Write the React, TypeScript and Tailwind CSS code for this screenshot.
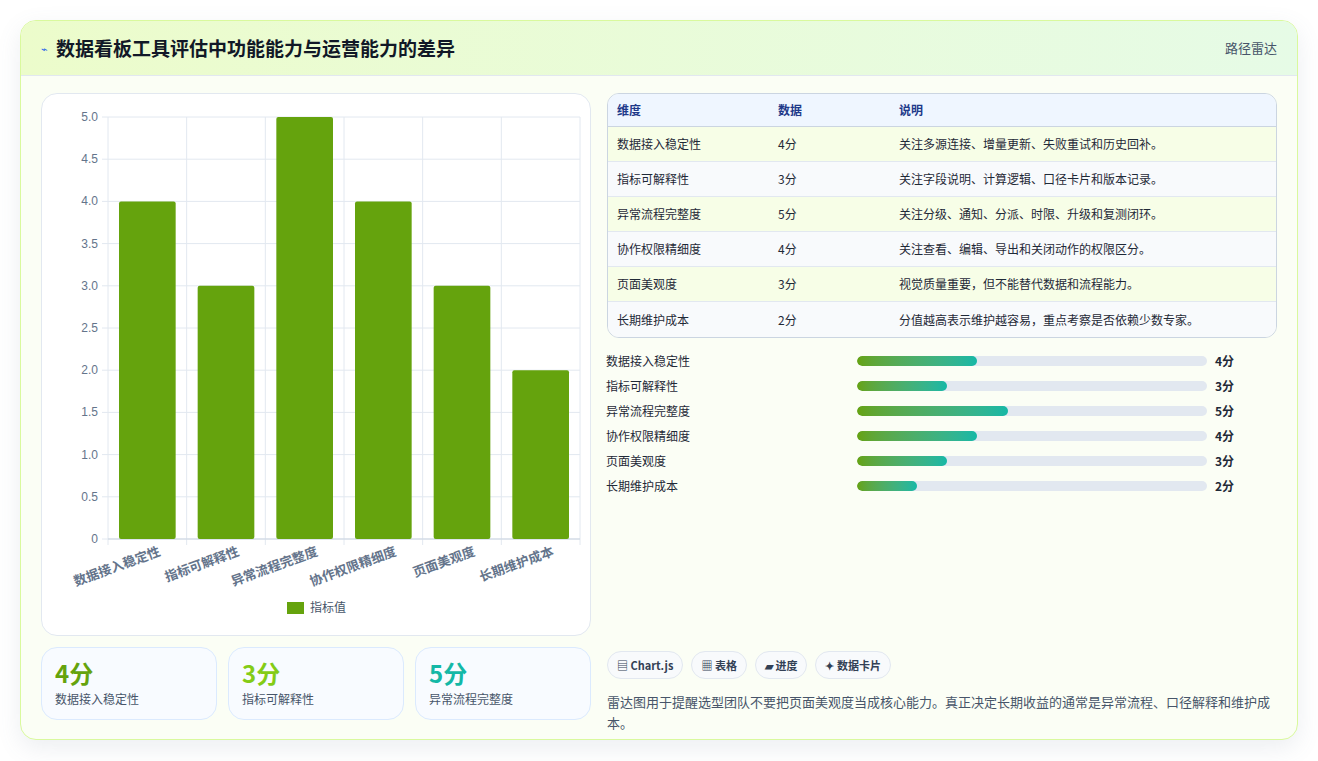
import React from "react";

const F = { fontFamily: '"Noto Sans CJK SC", "Noto Sans", sans-serif' };
const items = [
  ["数据接入稳定性", 4, "关注多源连接、增量更新、失败重试和历史回补。"],
  ["指标可解释性", 3, "关注字段说明、计算逻辑、口径卡片和版本记录。"],
  ["异常流程完整度", 5, "关注分级、通知、分派、时限、升级和复测闭环。"],
  ["协作权限精细度", 4, "关注查看、编辑、导出和关闭动作的权限区分。"],
  ["页面美观度", 3, "视觉质量重要，但不能替代数据和流程能力。"],
  ["长期维护成本", 2, "分值越高表示维护越容易，重点考察是否依赖少数专家。"],
] as const;

function Chart() {
  const L = 66, R = 538, T = 23, B = 445;
  const cw = (R - L) / 6;
  const y = (v: number) => B - (v / 5) * (B - T);
  const ticks = [0, 0.5, 1, 1.5, 2, 2.5, 3, 3.5, 4, 4.5, 5];
  return (
    <svg width="550" height="541" style={{ fontFamily: '"Noto Sans CJK SC", sans-serif' }}>
      {ticks.map((t) => (
        <g key={t}>
          <line x1={L - 6} x2={R} y1={y(t)} y2={y(t)} stroke="#e2e8f0" />
          <text x={L - 10} y={y(t) + 4} textAnchor="end" fontSize="12" fill="#64748b" fontFamily="Liberation Sans, sans-serif">
            {t === 0 ? "0" : t.toFixed(1)}
          </text>
        </g>
      ))}
      {Array.from({ length: 7 }).map((_, i) => (
        <line key={i} x1={L + i * cw} x2={L + i * cw} y1={T} y2={B + 6} stroke="#e2e8f0" />
      ))}
      <line x1={L} x2={R} y1={B} y2={B} stroke="#cbd5e1" />
      {items.map(([n, v], i) => (
        <g key={n}>
          <rect x={L + i * cw + 11} y={y(v)} width={cw - 22} height={B - y(v)} rx="2" fill="#65a30d" />
          <text
            transform={`translate(${L + i * cw + cw / 2 + 14},${B + 16}) rotate(-20)`}
            textAnchor="end"
            fontSize="13"
            fontWeight="700"
            fill="#64748b"
          >
            {n}
          </text>
        </g>
      ))}
      <rect x="245" y="508" width="17" height="12" fill="#65a30d" />
      <text x="268" y="518" fontSize="12" fill="#475569">指标值</text>
    </svg>
  );
}

export default function App() {
  return (
    <div className="w-[1318px] h-[761px] bg-white p-5" style={F}>
      <div className="h-[720px] rounded-2xl border border-[#d9f99d] bg-[#fbfef5] shadow-[0_8px_24px_rgba(100,116,139,0.12)] overflow-hidden flex flex-col">
        <div className="h-[55px] flex items-center justify-between px-5 bg-gradient-to-r from-[#ecfccb] to-[#e6fbe6] border-b border-[#e2e8f0]">
          <div className="flex items-center gap-2">
            <span className="text-[11px] text-[#2563eb]">⌁</span>
            <span className="text-[19px] font-bold text-[#111827]">数据看板工具评估中功能能力与运营能力的差异</span>
          </div>
          <span className="text-[13px] text-[#475569]">路径雷达</span>
        </div>
        <div className="flex gap-4 px-5 pt-[17px]">
          <div className="w-[550px] flex flex-col gap-[11px]">
            <div className="h-[543px] rounded-2xl border border-[#e2e8f0] bg-white overflow-hidden">
              <Chart />
            </div>
            <div className="flex gap-[11px]">
              {[["4分", "text-[#65a30d]", "数据接入稳定性"], ["3分", "text-[#84cc16]", "指标可解释性"], ["5分", "text-[#14b8a6]", "异常流程完整度"]].map(([v, c, l]) => (
                <div key={l} className="flex-1 h-[73px] rounded-2xl border border-[#dbeafe] bg-[#f8fbff] px-[13px] pt-[10px]">
                  <div className={`text-[24px] font-bold leading-[30px] ${c}`}>{v}</div>
                  <div className="text-[12px] text-[#475569] mt-[2px]">{l}</div>
                </div>
              ))}
            </div>
          </div>
          <div className="flex-1 flex flex-col">
            <div className="rounded-xl border border-[#cbd5e1] overflow-hidden text-[12px]">
              <div className="flex h-[33px] items-center bg-[#eff6ff] text-[#1e3a8a] font-bold border-b border-[#cbd5e1]">
                <div className="w-[170px] pl-[9px]">维度</div>
                <div className="w-[121px]">数据</div>
                <div>说明</div>
              </div>
              {items.map(([n, v, d], i) => (
                <div key={n} className={`flex h-[35px] items-center text-[#1f2937] ${i % 2 ? "bg-[#f8fafc]" : "bg-[#f7fee7]"} ${i < 5 ? "border-b border-[#e2e8f0]" : ""}`}>
                  <div className="w-[170px] pl-[9px]">{n}</div>
                  <div className="w-[121px]">{v}分</div>
                  <div>{d}</div>
                </div>
              ))}
            </div>
            <div className="mt-[10px] flex flex-col">
              {items.map(([n, v]) => (
                <div key={n} className="flex items-center h-[25px] text-[12px] text-[#1f2937]">
                  <div className="w-[251px] -ml-px">{n}</div>
                  <div className="w-[350px] h-[10px] rounded-full bg-[#e2e8f0] overflow-hidden">
                    <div className="h-full rounded-full bg-gradient-to-r from-[#65a30d] to-[#14b8a6]" style={{ width: `${v * 8.6}%` }} />
                  </div>
                  <div className="ml-2 font-bold">{v}分</div>
                </div>
              ))}
            </div>
            <div className="mt-[153px] flex gap-2 text-[11px] font-bold text-[#334155]">
              {["▤ Chart.js", "▦ 表格", "▰ 进度", "✦ 数据卡片"].map((c) => (
                <span key={c} className="h-[28px] px-[9px] flex items-center rounded-full border border-[#e2e8f0] bg-[#f8fafc]">{c}</span>
              ))}
            </div>
            <p className="mt-[12px] text-[13px] leading-[21px] text-[#475569]">
              雷达图用于提醒选型团队不要把页面美观度当成核心能力。真正决定长期收益的通常是异常流程、口径解释和维护成本。
            </p>
          </div>
        </div>
      </div>
    </div>
  );
}
